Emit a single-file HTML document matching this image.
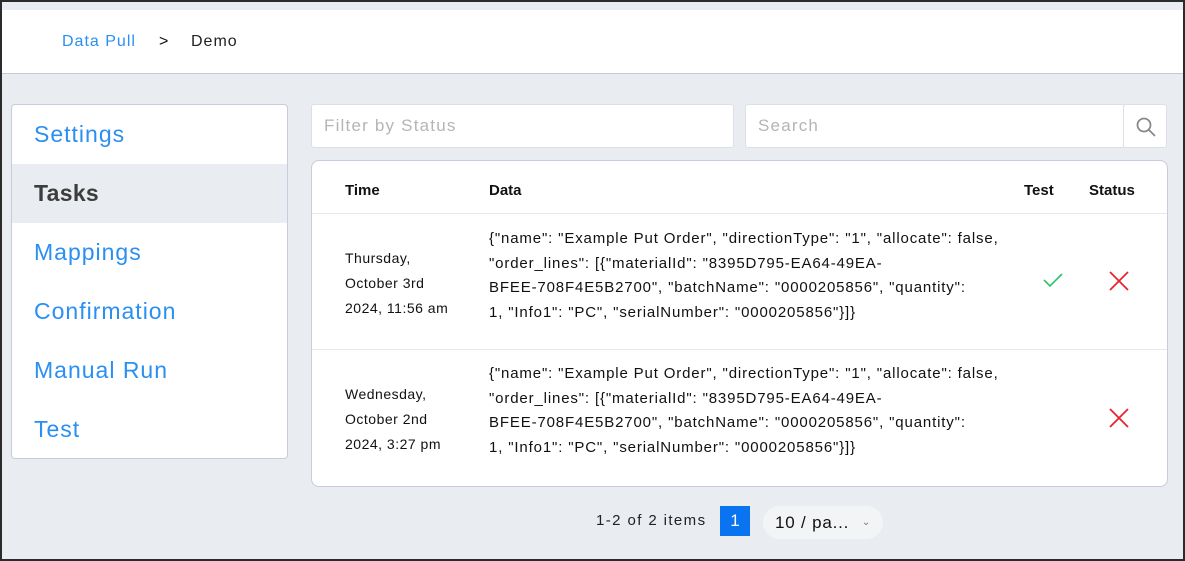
<!DOCTYPE html>
<html><head><style>
*{margin:0;padding:0;box-sizing:border-box}
body{width:1185px;height:561px;background:#2b2b2b;font-family:"Liberation Sans",sans-serif;position:relative;overflow:hidden}
.page{position:absolute;left:2px;top:2px;width:1181px;height:557px;background:#e9ecf1}
.hdr{position:absolute;left:0;top:8px;width:1181px;height:64px;background:#fff;border-bottom:1px solid #c5c8d6}
.a{position:absolute;white-space:nowrap}
.side{position:absolute;left:9px;top:102px;width:277px;height:355px;background:#fff;border:1px solid #c8cbd9;border-radius:4px;overflow:hidden}
.side div{height:59px;line-height:59px;padding-left:22px;font-size:23px;color:#2a8ff2;letter-spacing:1px}
.side .act{background:#e9ecf1;color:#3d3d3d;font-weight:bold;letter-spacing:0.3px}
.inp{position:absolute;background:#fff;border:1px solid #dcdfe6;border-radius:3px;color:#b5b5b5;font-size:17px;padding-left:12px;line-height:42px;letter-spacing:1.2px}
.tbl{position:absolute;left:309px;top:158px;width:857px;height:327px;background:#fff;border:1px solid #c8cbd9;border-radius:8px}
.th{font-weight:bold;font-size:15px;color:#111}
.row{position:absolute;left:0;width:855px;border-top:1px solid #e8e8e8}
.t{font-size:14px;color:#111;line-height:25px;letter-spacing:0.5px}
.d{font-size:15px;color:#111;line-height:24.5px;letter-spacing:0.85px}
</style></head><body><div class="page">
<div class="hdr">
<span class="a" style="left:60px;top:23px;font-size:16px;color:#2a8ff2;letter-spacing:1px">Data Pull</span>
<span class="a" style="left:157px;top:23px;font-size:16px;color:#111">&gt;</span>
<span class="a" style="left:189px;top:23px;font-size:16px;color:#222;letter-spacing:1px">Demo</span>
</div>
<div class="side">
<div>Settings</div><div class="act">Tasks</div><div>Mappings</div><div>Confirmation</div><div>Manual Run</div><div>Test</div>
</div>
<div class="inp" style="left:309px;top:102px;width:423px;height:44px">Filter by Status</div>
<div class="inp" style="left:743px;top:102px;width:380px;height:44px">Search</div>
<div class="inp" style="left:1121px;top:102px;width:44px;height:44px;padding:0">
<svg width="44" height="44" viewBox="0 0 44 44"><circle cx="20" cy="20" r="6.5" fill="none" stroke="#888" stroke-width="1.8"/><line x1="25" y1="25" x2="31" y2="31" stroke="#888" stroke-width="1.8"/></svg></div>
<div class="tbl">
<span class="a th" style="left:33px;top:21px">Time</span>
<span class="a th" style="left:177px;top:21px">Data</span>
<span class="a th" style="left:712px;top:21px">Test</span>
<span class="a th" style="left:777px;top:21px">Status</span>
<div class="row" style="top:52px;height:136px">
<div class="a t" style="left:33px;top:32px">Thursday,<br>October 3rd<br>2024, 11:56 am</div>
<div class="a d" style="left:177px;top:13px">{"name": "Example Put Order", "directionType": "1", "allocate": false,<br>"order_lines": [{"materialId": "8395D795-EA64-49EA-<br>BFEE-708F4E5B2700", "batchName": "0000205856", "quantity":<br>1, "Info1": "PC", "serialNumber": "0000205856"}]}</div>
<svg class="a" style="left:730px;top:57px" width="22" height="18"><polyline points="2,9 8,15 20,3" fill="none" stroke="#2ec46a" stroke-width="1.6"/></svg>
<svg class="a" style="left:796px;top:56px" width="22" height="22"><path d="M2 2L20 20M20 2L2 20" stroke="#e8232f" stroke-width="1.8"/></svg>
</div>
<div class="row" style="top:188px;height:137px">
<div class="a t" style="left:33px;top:32px">Wednesday,<br>October 2nd<br>2024, 3:27 pm</div>
<div class="a d" style="left:177px;top:12px">{"name": "Example Put Order", "directionType": "1", "allocate": false,<br>"order_lines": [{"materialId": "8395D795-EA64-49EA-<br>BFEE-708F4E5B2700", "batchName": "0000205856", "quantity":<br>1, "Info1": "PC", "serialNumber": "0000205856"}]}</div>
<svg class="a" style="left:796px;top:57px" width="22" height="22"><path d="M2 2L20 20M20 2L2 20" stroke="#e8232f" stroke-width="1.8"/></svg>
</div>
</div>
<span class="a" style="left:594px;top:510px;font-size:15px;color:#222;letter-spacing:1.4px">1-2 of 2 items</span>
<div class="a" style="left:718px;top:504px;width:30px;height:30px;background:#0a74f0;color:#fff;font-size:17px;text-align:center;line-height:30px">1</div>
<div class="a" style="left:761px;top:504px;width:120px;height:33px;background:#f3f4f6;border-radius:17px;font-size:17px;color:#111;line-height:33px;padding-left:12px;letter-spacing:0.8px">10 / pa...<span style="position:absolute;right:12px;top:0;font-size:10px;color:#777">&#8964;</span></div>
</div></body></html>
